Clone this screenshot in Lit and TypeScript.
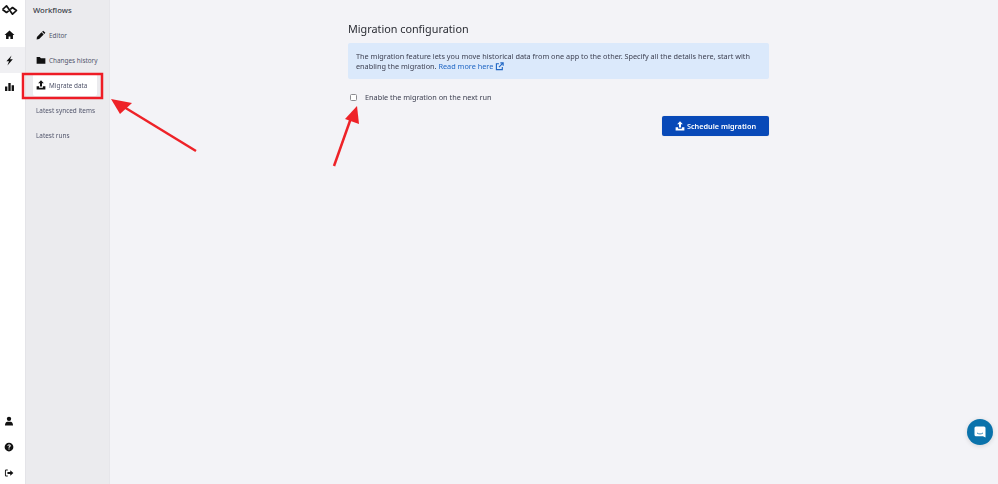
import { LitElement, html, css, svg } from "lit";
import { customElement } from "lit/decorators.js";

const upload = (s: number) => html`<svg class="ic" width=${s} height=${s} viewBox="0 0 16 16" fill="currentColor"><path d="M8 .5 3.500 5.200H6.400V10.500h3.200V5.200h2.900z"/><path d="M1 10h4v2.500h6V10h4v5H1z"/></svg>`;

const railTop = [
  { cls: "", d: "M8 2 .8 8.600h2.200V14.500h3.700v-3.500h2.600v3.500H13V8.600h2.200z" },
  { cls: "on", d: "M11 .8 3.500 9.200h3.800L5 15.200l7.800-8.900H8.800z" },
  { cls: "", d: "M1.500 8h3.400v6.500H1.500zM6.300 2.800h3.400v11.700H6.300zM11.100 6h3.400v8.500h-3.400z" },
];
const railBottom = [
  { d: "M8 1a3.500 3.500 0 1 1 0 7 3.500 3.500 0 0 1 0-7zM1.500 15c0-3.700 2-6 3.700-6h5.600c1.700 0 3.700 2.300 3.700 6z" },
  { d: "M8 1a7 7 0 1 1 0 14A7 7 0 0 1 8 1zm-.9 9.300v1.800h1.800v-1.800zM8 3.800c-1.500 0-2.600.9-2.700 2.300h1.700c.1-.5.4-.8 1-.8s1 .3 1 .8c0 .9-1.900 1-1.900 3h1.800c0-1.300 1.900-1.500 1.900-3.200 0-1.300-1.100-2.100-2.800-2.100z" },
  { d: "M6 2.500H3.500A2 2 0 0 0 1.500 4.500v7a2 2 0 0 0 2 2H6V12H3.500a.5.5 0 0 1-.5-.5v-7a.5.5 0 0 1 .5-.5H6zM10 3.500v3H5.500v3H10v3L15 8z" },
];

@customElement("app-root")
export class AppRoot extends LitElement {
  static styles = css`
    :host { display: block; width: 998px; height: 484px; position: relative; overflow: hidden;
      font-family: "Noto Sans", sans-serif; color: #3c3f4a; background: #f3f3f7; }
    .page { display: flex; height: 484px; filter: blur(.3px); }
    .rail { width: 25px; flex: none; background: #fff; border-right: 1px solid #e4e4e8; display: flex; flex-direction: column; }
    .logo { height: 20px; display: flex; align-items: center; justify-content: center; margin-bottom: 1px; padding-right: 6px; background:#fff; }
    .ri { height: 26px; display: flex; align-items: center; justify-content: center; padding-right: 6px; color: #111; }
    .ri.on { background: #f0f0f3; }
    .spacer { flex: 1; }
    .bottom { display: flex; flex-direction: column; margin-bottom: -2px; }
    .bottom .ri { padding-right: 8px; }
    .side { width: 84px; flex: none; background: #ebebee; border-right: 1px solid #e6e6ea; box-sizing: border-box; }
    .side h2 { margin: 0; font-size: 7.700px; font-weight: 500; color: #3a3d48; line-height: 12px; padding: 4px 0 0 7px; }
    .nav { display: flex; flex-direction: column; gap: 3.200px; padding: 8px 12px 0 7px; }
    .item { height: 22px; display: flex; align-items: center; gap: 3px; font-size: 6.400px; color: #50546a; padding-left: 3px; border-radius: 2px; white-space: nowrap; }
    .item.sel { background: #fff; }
    .item svg { color: #111; flex: none; }
    .main { flex: 1; display: flex; justify-content: center; padding-left: 9px; }
    .content { width: 421px; padding-top: 20px; display: flex; flex-direction: column; }
    h1 { margin: 0; font-size: 10.800px; font-weight: 400; line-height: 18px; color: #2a2c33; }
    .note { margin-top: 5px; background: #dbe9fb; border-radius: 2px; height: 36px; box-sizing: border-box; padding: 7.500px 8px; font-size: 7.300px; line-height: 10.500px; color: #3c3f50; }
    .note a { color: #1f66c4; text-decoration: none; }
    .note svg { vertical-align: -1.500px; }
    .check { display: flex; align-items: center; margin-top: 12.500px; gap: 8px; font-size: 7.300px; line-height: 11px; color: #3c3f50; height: 11px; }
    .box { width: 5px; height: 5px; margin-left: 2px; border: 1px solid #8b8b90; border-radius: 1.500px; background: #fff; flex: none; }
    .actions { display: flex; justify-content: flex-end; margin-top: 13px; }
    button { width: 107px; height: 20px; background: #0849b8; color: #fff; border: 0; border-radius: 2px; font: 600 7.300px "Noto Sans", sans-serif; display: flex; align-items: center; justify-content: center; gap: 2px; padding: 0; box-shadow: 0 0 1px #0003; }
    .chat { position: absolute; left: 967px; top: 419px; width: 26px; height: 26px; border-radius: 50%; background: #0a72ab; display: flex; align-items: center; justify-content: center; box-shadow: 0 1px 5px #0002; }
    .overlay { position: absolute; left: 0; top: 0; pointer-events: none; }
  `;

  render() {
    return html`
      <div class="page">
        <div class="rail">
          <div class="logo"><svg width="17" height="12" viewBox="0 0 17 12" fill="none" stroke="#111" stroke-width="1.700" stroke-linejoin="round"><path d="M1.500 5.500 5.500 1.800 11.500 10.200 15.500 6.500 11.500 3.500 9.300 5.300M7.700 6.800 5.500 8.500 1.500 5.500"/></svg></div>
          ${railTop.map((r) => html`<div class="ri ${r.cls}"><svg width="11" height="11" viewBox="0 0 16 16" fill="currentColor"><path d=${r.d}/></svg></div>`)}
          <div class="spacer"></div>
          <div class="bottom">
            ${railBottom.map((r) => html`<div class="ri"><svg width="10" height="10" viewBox="0 0 16 16" fill="currentColor"><path d=${r.d}/></svg></div>`)}
          </div>
        </div>
        <div class="side">
          <h2>Workflows</h2>
          <div class="nav">
            <div class="item"><svg width="10" height="10" viewBox="0 0 16 16" fill="currentColor"><path d="M11.500 1 15 4.500 13.300 6.200 9.800 2.700zM8.800 3.700l3.500 3.500L5 14.500 1 15l.5-4z"/></svg>Editor</div>
            <div class="item"><svg width="10" height="10" viewBox="0 0 16 16" fill="currentColor"><path d="M1 3h5l2 2h7v9H1z"/></svg>Changes history</div>
            <div class="item sel">${upload(10)}Migrate data</div>
            <div class="item">Latest synced items</div>
            <div class="item">Latest runs</div>
          </div>
        </div>
        <div class="main">
          <div class="content">
            <h1>Migration configuration</h1>
            <div class="note">The migration feature lets you move historical data from one app to the other. Specify all the details here, start with enabling the migration. <a href="#">Read more here <svg width="9" height="9" viewBox="0 0 16 16" fill="none" stroke="currentColor" stroke-width="2"><path d="M7 3H2.500v10.500H13V9M9.500 1.500h5v5M14 2 7 9"/></svg></a></div>
            <label class="check"><span class="box"></span>Enable the migration on the next run</label>
            <div class="actions"><button>${upload(10)}Schedule migration</button></div>
          </div>
        </div>
      </div>
      <div class="chat"><svg width="14" height="14" viewBox="0 0 14 14"><path d="M3 1.500h8a1.500 1.500 0 0 1 1.500 1.500v9.500L10 11.200H3A1.500 1.500 0 0 1 1.500 9.700V3A1.500 1.500 0 0 1 3 1.500z" fill="#fff"/><path d="M4 8c2 1.300 4 1.300 6 0" stroke="#0a72ab" fill="none" stroke-width=".8"/></svg></div>
      <svg class="overlay" width="998" height="484" viewBox="0 0 998 484">
        ${svg`<rect x="23" y="74" width="79" height="24" fill="none" stroke="#ee1c25" stroke-width="2.500"/>
        <path d="M196 151 124 107" stroke="#ee2228" stroke-width="2.500" fill="none"/>
        <path d="M111 99 132 103 120 114z" fill="#ee2228"/>
        <path d="M334 166 351 118" stroke="#ee2228" stroke-width="2.500" fill="none"/>
        <path d="M357 106 359 124 345 119z" fill="#ee2228"/>`}
      </svg>
    `;
  }
}
